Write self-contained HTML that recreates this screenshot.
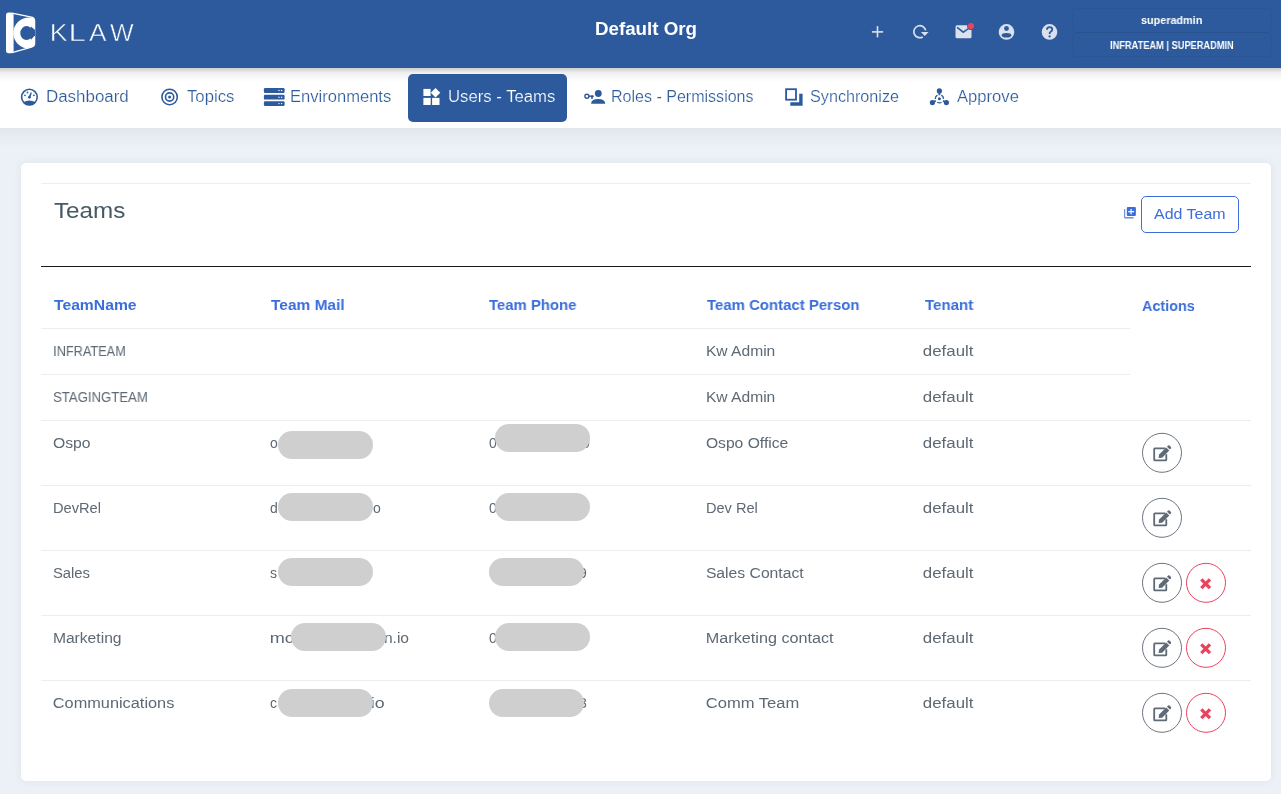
<!DOCTYPE html>
<html><head><meta charset="utf-8">
<style>
*{box-sizing:border-box;margin:0;padding:0}
html,body{width:1281px;height:794px;overflow:hidden;background:#ecf0f7;font-family:"Liberation Sans",sans-serif}
.t{position:absolute;white-space:pre;font-family:"Liberation Sans",sans-serif;will-change:transform}
.abs{position:absolute}
#hdr{position:absolute;left:0;top:0;width:1281px;height:68px;background:#2c5a9c}
#nav{position:absolute;left:0;top:68px;width:1281px;height:60px;background:#fff}
#navshadow{position:absolute;left:0;top:68px;width:1281px;height:14px;background:linear-gradient(rgba(0,0,0,0.2),rgba(0,0,0,0.06) 35%,rgba(0,0,0,0))}
#bgshadow{position:absolute;left:0;top:128px;width:1281px;height:20px;background:linear-gradient(rgba(40,50,60,0.05),rgba(40,50,60,0.02) 50%,rgba(0,0,0,0))}
#active{position:absolute;left:408px;top:74px;width:159px;height:48px;background:#2c5a9c;border-radius:5px}
#card{position:absolute;left:21px;top:163px;width:1250px;height:618px;background:#fff;border-radius:5px;box-shadow:0 0 10px rgba(0,0,0,0.06)}
.ln{position:absolute;height:1px;background:#ebedf0}
.pill{position:absolute;width:95px;height:28px;border-radius:14px;background:#cfcfcf}
.circ{position:absolute;width:40px;height:40px;border-radius:50%;border:1px solid #6b7480}
.circ.del{border-color:#e9435e}
#ubox1,#ubox2{position:absolute;left:1072px;width:200px;border:1px solid rgba(0,0,0,0.035);border-radius:4px}
</style></head><body>
<div id="hdr"></div>
<div id="ubox1" style="top:8px;height:25px"></div>
<div id="ubox2" style="top:32px;height:25px"></div>
<div id="nav"></div>
<div id="navshadow"></div>
<div id="bgshadow"></div>
<div id="active"></div>
<div id="card"></div>
<div class="ln" style="left:41px;top:183px;width:1210px;background:#eceef1"></div>
<div class="ln" style="left:41px;top:266px;width:1210px;background:#1a1a1a"></div>
<div class="ln" style="left:41px;top:328px;width:1089px"></div>
<div class="ln" style="left:41px;top:374px;width:1089px"></div>
<div class="ln" style="left:41px;top:420px;width:1210px"></div>
<div class="ln" style="left:41px;top:485px;width:1210px"></div>
<div class="ln" style="left:41px;top:550px;width:1210px"></div>
<div class="ln" style="left:41px;top:615px;width:1210px"></div>
<div class="ln" style="left:41px;top:680px;width:1210px"></div>
<div class="abs" style="left:1141px;top:196px;width:98px;height:37px;border:1px solid #3b6edb;border-radius:5px"></div>
<div class=t style="left:595px;top:19.76px;font-size:18px;line-height:18px;font-weight:700;color:#fff;transform-origin:1px 0;transform:scaleX(1.0417);">Default Org</div>
<div class=t style="left:1141px;top:14.99px;font-size:11px;line-height:11px;font-weight:700;color:#fff;transform-origin:1px 0;transform:scaleX(0.9836);">superadmin</div>
<div class=t style="left:1110px;top:40.73px;font-size:10px;line-height:10px;font-weight:700;color:#fff;transform-origin:1px 0;transform:scaleX(0.9242);">INFRATEAM | SUPERADMIN</div>
<div class=t style="left:49.8px;top:21.18px;font-size:24px;line-height:24px;font-weight:400;color:#fff;transform-origin:2px 0;transform:scaleX(1.1214);-webkit-text-stroke:0.5px #2c5a9c;">K</div>
<div class=t style="left:68.6px;top:21.18px;font-size:24px;line-height:24px;font-weight:400;color:#fff;transform-origin:2px 0;transform:scaleX(1.3091);-webkit-text-stroke:0.5px #2c5a9c;">L</div>
<div class=t style="left:89.4px;top:21.18px;font-size:24px;line-height:24px;font-weight:400;color:#fff;transform-origin:0px 0;transform:scaleX(1.0938);-webkit-text-stroke:0.5px #2c5a9c;">A</div>
<div class=t style="left:110px;top:21.18px;font-size:24px;line-height:24px;font-weight:400;color:#fff;transform-origin:0px 0;transform:scaleX(1.0435);-webkit-text-stroke:0.5px #2c5a9c;">W</div>
<div class=t style="left:46px;top:89.06px;font-size:16px;line-height:16px;font-weight:400;color:#2c5a9c;transform-origin:1px 0;transform:scaleX(1.0584);-webkit-text-stroke:0.2px #fff;">Dashboard</div>
<div class=t style="left:187px;top:89.06px;font-size:16px;line-height:16px;font-weight:400;color:#2c5a9c;transform-origin:0px 0;transform:scaleX(1.0444);-webkit-text-stroke:0.2px #fff;">Topics</div>
<div class=t style="left:290px;top:89.06px;font-size:16px;line-height:16px;font-weight:400;color:#2c5a9c;transform-origin:1px 0;transform:scaleX(1.0354);-webkit-text-stroke:0.2px #fff;">Environments</div>
<div class=t style="left:447.5px;top:89.06px;font-size:16px;line-height:16px;font-weight:400;color:#fff;transform-origin:1px 0;transform:scaleX(1.0446);-webkit-text-stroke:0.2px #2c5a9c;">Users - Teams</div>
<div class=t style="left:610.7px;top:89.06px;font-size:16px;line-height:16px;font-weight:400;color:#2c5a9c;transform-origin:1px 0;transform:scaleX(1.0021);-webkit-text-stroke:0.2px #fff;">Roles - Permissions</div>
<div class=t style="left:809.5px;top:89.06px;font-size:16px;line-height:16px;font-weight:400;color:#2c5a9c;transform-origin:1px 0;transform:scaleX(1.0115);-webkit-text-stroke:0.2px #fff;">Synchronize</div>
<div class=t style="left:956.7px;top:89.06px;font-size:16px;line-height:16px;font-weight:400;color:#2c5a9c;transform-origin:0px 0;transform:scaleX(1.0390);-webkit-text-stroke:0.2px #fff;">Approve</div>
<div class=t style="left:53.5px;top:199.98px;font-size:22px;line-height:22px;font-weight:400;color:#455a64;transform-origin:0px 0;transform:scaleX(1.1016);">Teams</div>
<div class=t style="left:1154.4px;top:207.15px;font-size:14px;line-height:14px;font-weight:400;color:#3b6edb;transform-origin:0px 0;transform:scaleX(1.1403);">Add Team</div>
<div class=t style="left:53.6px;top:297.28px;font-size:15.5px;line-height:15.5px;font-weight:700;color:#3b6edb;transform-origin:0px 0;transform:scaleX(1.0123);">TeamName</div>
<div class=t style="left:271.1px;top:297.28px;font-size:15.5px;line-height:15.5px;font-weight:700;color:#3b6edb;transform-origin:0px 0;transform:scaleX(0.9973);">Team Mail</div>
<div class=t style="left:489px;top:297.28px;font-size:15.5px;line-height:15.5px;font-weight:700;color:#3b6edb;transform-origin:0px 0;transform:scaleX(0.9593);">Team Phone</div>
<div class=t style="left:706.8px;top:297.28px;font-size:15.5px;line-height:15.5px;font-weight:700;color:#3b6edb;transform-origin:0px 0;transform:scaleX(0.9637);">Team Contact Person</div>
<div class=t style="left:924.8px;top:297.28px;font-size:15.5px;line-height:15.5px;font-weight:700;color:#3b6edb;transform-origin:0px 0;transform:scaleX(0.9700);">Tenant</div>
<div class=t style="left:1142.3px;top:297.88px;font-size:15.5px;line-height:15.5px;font-weight:700;color:#3b6edb;transform-origin:0px 0;transform:scaleX(0.9286);">Actions</div>
<div class=t style="left:52.5px;top:344.25px;font-size:14px;line-height:14px;font-weight:400;color:#5d6975;transform-origin:1px 0;transform:scaleX(0.9103);">INFRATEAM</div>
<div class=t style="left:705.5px;top:344.25px;font-size:14px;line-height:14px;font-weight:400;color:#5d6975;transform-origin:1px 0;transform:scaleX(1.1148);">Kw Admin</div>
<div class=t style="left:923.2px;top:344.25px;font-size:14px;line-height:14px;font-weight:400;color:#5d6975;transform-origin:1px 0;transform:scaleX(1.2049);">default</div>
<div class=t style="left:52.5px;top:390.25px;font-size:14px;line-height:14px;font-weight:400;color:#5d6975;transform-origin:1px 0;transform:scaleX(0.9394);">STAGINGTEAM</div>
<div class=t style="left:705.5px;top:390.25px;font-size:14px;line-height:14px;font-weight:400;color:#5d6975;transform-origin:1px 0;transform:scaleX(1.1148);">Kw Admin</div>
<div class=t style="left:923.2px;top:390.25px;font-size:14px;line-height:14px;font-weight:400;color:#5d6975;transform-origin:1px 0;transform:scaleX(1.2049);">default</div>
<div class=t style="left:52.5px;top:436.25px;font-size:14px;line-height:14px;font-weight:400;color:#5d6975;transform-origin:1px 0;transform:scaleX(1.1250);">Ospo</div>
<div class=t style="left:705.5px;top:436.25px;font-size:14px;line-height:14px;font-weight:400;color:#5d6975;transform-origin:1px 0;transform:scaleX(1.1181);">Ospo Office</div>
<div class=t style="left:923.2px;top:436.25px;font-size:14px;line-height:14px;font-weight:400;color:#5d6975;transform-origin:1px 0;transform:scaleX(1.2049);">default</div>
<div class=t style="left:52.5px;top:501.25px;font-size:14px;line-height:14px;font-weight:400;color:#5d6975;transform-origin:1px 0;transform:scaleX(1.0455);">DevRel</div>
<div class=t style="left:705.5px;top:501.25px;font-size:14px;line-height:14px;font-weight:400;color:#5d6975;transform-origin:1px 0;transform:scaleX(1.0417);">Dev Rel</div>
<div class=t style="left:923.2px;top:501.25px;font-size:14px;line-height:14px;font-weight:400;color:#5d6975;transform-origin:1px 0;transform:scaleX(1.2049);">default</div>
<div class=t style="left:52.5px;top:566.25px;font-size:14px;line-height:14px;font-weight:400;color:#5d6975;transform-origin:1px 0;transform:scaleX(1.0588);">Sales</div>
<div class=t style="left:705.5px;top:566.25px;font-size:14px;line-height:14px;font-weight:400;color:#5d6975;transform-origin:1px 0;transform:scaleX(1.1221);">Sales Contact</div>
<div class=t style="left:923.2px;top:566.25px;font-size:14px;line-height:14px;font-weight:400;color:#5d6975;transform-origin:1px 0;transform:scaleX(1.2049);">default</div>
<div class=t style="left:52.5px;top:631.25px;font-size:14px;line-height:14px;font-weight:400;color:#5d6975;transform-origin:1px 0;transform:scaleX(1.1167);">Marketing</div>
<div class=t style="left:705.5px;top:631.25px;font-size:14px;line-height:14px;font-weight:400;color:#5d6975;transform-origin:1px 0;transform:scaleX(1.1560);">Marketing contact</div>
<div class=t style="left:923.2px;top:631.25px;font-size:14px;line-height:14px;font-weight:400;color:#5d6975;transform-origin:1px 0;transform:scaleX(1.2049);">default</div>
<div class=t style="left:52.5px;top:696.25px;font-size:14px;line-height:14px;font-weight:400;color:#5d6975;transform-origin:1px 0;transform:scaleX(1.1650);">Communications</div>
<div class=t style="left:705.5px;top:696.25px;font-size:14px;line-height:14px;font-weight:400;color:#5d6975;transform-origin:1px 0;transform:scaleX(1.1818);">Comm Team</div>
<div class=t style="left:923.2px;top:696.25px;font-size:14px;line-height:14px;font-weight:400;color:#5d6975;transform-origin:1px 0;transform:scaleX(1.2049);">default</div>
<div class=t style="left:270.3px;top:436.15px;font-size:14px;line-height:14px;font-weight:400;color:#5d6975;transform-origin:1px 0;transform:scaleX(1.0000);">o</div>
<div class=t style="left:489px;top:436.15px;font-size:14px;line-height:14px;font-weight:400;color:#5d6975;transform-origin:0px 0;transform:scaleX(1.0000);">0</div>
<div class=t style="left:582px;top:436.15px;font-size:14px;line-height:14px;font-weight:400;color:#5d6975;transform-origin:0px 0;transform:scaleX(1.0000);">0</div>
<div class=t style="left:270.3px;top:501.15px;font-size:14px;line-height:14px;font-weight:400;color:#5d6975;transform-origin:1px 0;transform:scaleX(1.0000);">d</div>
<div class=t style="left:372.6px;top:501.15px;font-size:14px;line-height:14px;font-weight:400;color:#5d6975;transform-origin:1px 0;transform:scaleX(1.0000);">o</div>
<div class=t style="left:489px;top:501.15px;font-size:14px;line-height:14px;font-weight:400;color:#5d6975;transform-origin:0px 0;transform:scaleX(1.0000);">0</div>
<div class=t style="left:270.3px;top:566.15px;font-size:14px;line-height:14px;font-weight:400;color:#5d6975;transform-origin:1px 0;transform:scaleX(1.0000);">s</div>
<div class=t style="left:579px;top:566.15px;font-size:14px;line-height:14px;font-weight:400;color:#5d6975;transform-origin:1px 0;transform:scaleX(1.0000);">9</div>
<div class=t style="left:270.3px;top:631.15px;font-size:14px;line-height:14px;font-weight:400;color:#5d6975;transform-origin:1px 0;transform:scaleX(1.2941);">mc</div>
<div class=t style="left:383.6px;top:631.15px;font-size:14px;line-height:14px;font-weight:400;color:#5d6975;transform-origin:1px 0;transform:scaleX(1.1143);">n.io</div>
<div class=t style="left:489px;top:631.15px;font-size:14px;line-height:14px;font-weight:400;color:#5d6975;transform-origin:0px 0;transform:scaleX(1.0000);">0</div>
<div class=t style="left:270.3px;top:696.15px;font-size:14px;line-height:14px;font-weight:400;color:#5d6975;transform-origin:1px 0;transform:scaleX(1.0000);">c</div>
<div class=t style="left:371px;top:696.15px;font-size:14px;line-height:14px;font-weight:400;color:#5d6975;transform-origin:1px 0;transform:scaleX(1.2667);">io</div>
<div class=t style="left:579px;top:696.15px;font-size:14px;line-height:14px;font-weight:400;color:#5d6975;transform-origin:1px 0;transform:scaleX(1.0000);">3</div>
<div class=pill style="left:278.3px;top:431.2px"></div>
<div class=pill style="left:494.7px;top:424.2px"></div>
<div class=pill style="left:278.3px;top:492.5px"></div>
<div class=pill style="left:494.7px;top:492.5px"></div>
<div class=pill style="left:278.3px;top:557.6px"></div>
<div class=pill style="left:488.5px;top:557.6px"></div>
<div class=pill style="left:290.9px;top:622.5px"></div>
<div class=pill style="left:494.7px;top:622.5px"></div>
<div class=pill style="left:278.3px;top:689px"></div>
<div class=pill style="left:488.5px;top:689px"></div>
<svg class="abs" style="left:0;top:0" width="1281" height="794" viewBox="0 0 1281 794">
<defs>
<clipPath id="trap"><path d="M8.5 12.8 L31.5 17.2 Q34.3 17.9 34.3 20.5 L34.3 44 Q34.3 46.4 31.5 47 L8.5 53.2 Z"/></clipPath>
</defs>
<!-- Klaw logo -->
<g fill="#fff">
<rect x="6" y="12.6" width="7.6" height="40.6" rx="2.6"/>
<path d="M12 13.2 L31.5 17.2 Q34.6 18 34.6 20.8 L34.6 43.6 Q34.6 46.3 31.5 47.1 L12 52.6" fill="none" stroke="#fff" stroke-width="1.3"/>
<g clip-path="url(#trap)">
<path fill-rule="evenodd" d="M29 17.5 A15.7 15.5 0 1 0 29 48.5 A15.7 15.5 0 1 0 29 17.5 Z M26.5 26.1 A6.2 7 0 1 0 26.5 40.1 A6.2 7 0 1 0 26.5 26.1 Z"/>
</g>
<path d="M28 33.1 L31 26.5 L35 30.1 L35 35.2 L31 39.8 Z" fill="#2c5a9c"/>
</g>
<!-- header icons -->
<g fill="#d9e1ec" stroke="none">
<rect x="871.9" y="31.1" width="11.2" height="1.6"/>
<rect x="876.7" y="26.1" width="1.6" height="11.3"/>
<path d="M922.8 36.9 A6 6 0 1 1 925.7 30.4" fill="none" stroke="#d9e1ec" stroke-width="1.7"/>
<path d="M920.9 31.9 L928.6 31.9 L924.75 36.1 Z"/>
<rect x="955.5" y="25.3" width="16" height="13" rx="1.6"/>
<path d="M957.1 27.3 L963.3 32.2 L969.3 28" fill="none" stroke="#2c5a9c" stroke-width="1.5"/>
<circle cx="971" cy="26" r="3.9" fill="#2c5a9c"/>
<circle cx="971" cy="26" r="3.1" fill="#e9435e"/>
<circle cx="1006.5" cy="31.9" r="7.8"/>
<circle cx="1006.5" cy="28.5" r="2.4" fill="#2c5a9c"/>
<ellipse cx="1006.5" cy="35.2" rx="4.8" ry="2.3" fill="#2c5a9c"/>
<circle cx="1049.5" cy="31.9" r="7.8"/>
<path d="M1046.9 29.7 Q1046.9 27.1 1049.6 27.1 Q1052.3 27.1 1052.3 29.5 Q1052.3 31 1050.6 31.8 Q1049.6 32.4 1049.6 34" fill="none" stroke="#2c5a9c" stroke-width="1.8"/>
<circle cx="1049.6" cy="36.4" r="1.1" fill="#2c5a9c"/>
</g>
<!-- nav icons -->
<g fill="#2c5a9c">
<!-- dashboard -->
<circle cx="29.4" cy="97.1" r="7.8" fill="none" stroke="#2c5a9c" stroke-width="1.6"/>
<path d="M23.2 102.2 Q29.4 98.6 35.6 102.2 L34.2 104 Q29.4 106.6 24.6 104 Z"/>
<path d="M28.4 97.2 L30.8 92.2 L31.9 92.7 L30.2 97.9 Z"/>
<circle cx="29.4" cy="97.3" r="1.4"/>
<circle cx="25" cy="95.3" r="0.9"/>
<circle cx="27.5" cy="92.5" r="0.9"/>
<circle cx="33.9" cy="95.3" r="0.9"/>
<!-- topics -->
<circle cx="169.6" cy="97" r="7.7" fill="none" stroke="#2c5a9c" stroke-width="1.6"/>
<circle cx="169.6" cy="97" r="4.1" fill="none" stroke="#2c5a9c" stroke-width="1.6"/>
<circle cx="169.6" cy="97" r="1.5"/>
<!-- environments -->
<rect x="263.9" y="88.1" width="20.7" height="4.8" rx="1.2"/>
<rect x="263.9" y="94.8" width="20.7" height="4.8" rx="1.2"/>
<rect x="263.9" y="101.2" width="20.7" height="4.8" rx="1.2"/>
<g fill="#fff"><circle cx="279" cy="90.5" r="0.7"/><circle cx="281.6" cy="90.5" r="0.7"/><circle cx="279" cy="97.2" r="0.7"/><circle cx="281.6" cy="97.2" r="0.7"/><circle cx="279" cy="103.6" r="0.7"/><circle cx="281.6" cy="103.6" r="0.7"/></g>
<!-- roles -->
<circle cx="586.9" cy="96.2" r="2" fill="none" stroke="#2c5a9c" stroke-width="1.4"/>
<rect x="588.6" y="95.5" width="5.2" height="1.4"/>
<rect x="591.1" y="95.5" width="1.8" height="3.2"/>
<circle cx="598.3" cy="93.5" r="3.4"/>
<path d="M591.1 103.8 Q591.1 98.9 598.2 98.9 Q605.2 98.9 605.2 103.8 Z"/>
<!-- synchronize -->
<rect x="786.1" y="89.2" width="9.9" height="10.5" fill="none" stroke="#2c5a9c" stroke-width="1.8"/>
<path d="M799.2 93.8 L802.6 93.8 L802.6 105.8 L790.3 105.8 L790.3 102.2 L799.2 102.2 Z"/>
<!-- approve -->
<circle cx="939.4" cy="90.9" r="2.6"/>
<circle cx="932.4" cy="102.6" r="2.6"/>
<circle cx="946.4" cy="102.6" r="2.6"/>
<circle cx="939.4" cy="98.8" r="1.5"/>
<path d="M939.4 91 L939.4 95.3 M932.4 102.6 L935.85 100.85 M946.4 102.6 L942.95 100.85" stroke="#2c5a9c" stroke-width="1.7"/>
<path d="M941.32 95.18 A4.1 4.1 0 0 1 943.50 98.94" fill="none" stroke="#2c5a9c" stroke-width="1.3"/><path d="M941.57 102.28 A4.1 4.1 0 0 1 937.23 102.28" fill="none" stroke="#2c5a9c" stroke-width="1.3"/><path d="M935.30 98.94 A4.1 4.1 0 0 1 937.48 95.18" fill="none" stroke="#2c5a9c" stroke-width="1.3"/>
</g>
<!-- users-teams (white) -->
<g fill="#fff">
<rect x="423.4" y="88.9" width="7.2" height="7.1"/>
<rect x="423.4" y="97.9" width="7.3" height="7.1"/>
<rect x="432.1" y="97.9" width="7.4" height="7.1"/>
<path d="M435.5 87.9 L440.3 92.7 L435.5 97.4 L430.8 92.7 Z"/>
</g>
<!-- add team icon -->
<g fill="#3b6edb">
<path d="M1124 209 L1125.2 209 L1125.2 217.1 L1133.6 217.1 L1133.6 218.6 L1125 218.6 Q1124 218.6 1124 217.6 Z" opacity="0.75"/>
<rect x="1126.8" y="206.9" width="9.1" height="9.1" rx="1.1"/>
<rect x="1128.2" y="211.05" width="5.9" height="1.2" fill="#fff"/>
<rect x="1130.5" y="209" width="1.2" height="5.3" fill="#fff"/>
</g>
<circle cx="1162" cy="452.8" r="19.5" fill="none" stroke="#6b7480" stroke-width="1"/>
<g transform="translate(1142 432.8)" fill="#5f6a77"><path d="M23.3 15.5 L12.9 15.5 Q12.2 15.5 12.2 16.2 L12.2 26.9 Q12.2 27.6 12.9 27.6 L23.6 27.6 Q24.3 27.6 24.3 26.9 L24.3 21.5" fill="none" stroke="#5f6a77" stroke-width="1.8"/><path d="M16.6 25.2 L17.1 21.8 L24.2 14.7 L27.3 17.8 L20.2 24.9 Z"/><path d="M25 13.9 L26.1 12.8 Q26.8 12.2 27.5 12.8 L28.9 14.2 Q29.5 14.9 28.9 15.6 L27.9 16.7 Z"/></g>
<circle cx="1162" cy="517.8" r="19.5" fill="none" stroke="#6b7480" stroke-width="1"/>
<g transform="translate(1142 497.8)" fill="#5f6a77"><path d="M23.3 15.5 L12.9 15.5 Q12.2 15.5 12.2 16.2 L12.2 26.9 Q12.2 27.6 12.9 27.6 L23.6 27.6 Q24.3 27.6 24.3 26.9 L24.3 21.5" fill="none" stroke="#5f6a77" stroke-width="1.8"/><path d="M16.6 25.2 L17.1 21.8 L24.2 14.7 L27.3 17.8 L20.2 24.9 Z"/><path d="M25 13.9 L26.1 12.8 Q26.8 12.2 27.5 12.8 L28.9 14.2 Q29.5 14.9 28.9 15.6 L27.9 16.7 Z"/></g>
<circle cx="1162" cy="582.8" r="19.5" fill="none" stroke="#6b7480" stroke-width="1"/>
<g transform="translate(1142 562.8)" fill="#5f6a77"><path d="M23.3 15.5 L12.9 15.5 Q12.2 15.5 12.2 16.2 L12.2 26.9 Q12.2 27.6 12.9 27.6 L23.6 27.6 Q24.3 27.6 24.3 26.9 L24.3 21.5" fill="none" stroke="#5f6a77" stroke-width="1.8"/><path d="M16.6 25.2 L17.1 21.8 L24.2 14.7 L27.3 17.8 L20.2 24.9 Z"/><path d="M25 13.9 L26.1 12.8 Q26.8 12.2 27.5 12.8 L28.9 14.2 Q29.5 14.9 28.9 15.6 L27.9 16.7 Z"/></g>
<circle cx="1206" cy="582.8" r="19.5" fill="none" stroke="#e9435e" stroke-width="1"/>
<g transform="translate(1186 562.8)" stroke="#e9435e" stroke-width="3.3" stroke-linecap="butt"><path d="M15.3 16.6 L24 25.3 M24 16.6 L15.3 25.3"/></g>
<circle cx="1162" cy="647.8" r="19.5" fill="none" stroke="#6b7480" stroke-width="1"/>
<g transform="translate(1142 627.8)" fill="#5f6a77"><path d="M23.3 15.5 L12.9 15.5 Q12.2 15.5 12.2 16.2 L12.2 26.9 Q12.2 27.6 12.9 27.6 L23.6 27.6 Q24.3 27.6 24.3 26.9 L24.3 21.5" fill="none" stroke="#5f6a77" stroke-width="1.8"/><path d="M16.6 25.2 L17.1 21.8 L24.2 14.7 L27.3 17.8 L20.2 24.9 Z"/><path d="M25 13.9 L26.1 12.8 Q26.8 12.2 27.5 12.8 L28.9 14.2 Q29.5 14.9 28.9 15.6 L27.9 16.7 Z"/></g>
<circle cx="1206" cy="647.8" r="19.5" fill="none" stroke="#e9435e" stroke-width="1"/>
<g transform="translate(1186 627.8)" stroke="#e9435e" stroke-width="3.3" stroke-linecap="butt"><path d="M15.3 16.6 L24 25.3 M24 16.6 L15.3 25.3"/></g>
<circle cx="1162" cy="712.8" r="19.5" fill="none" stroke="#6b7480" stroke-width="1"/>
<g transform="translate(1142 692.8)" fill="#5f6a77"><path d="M23.3 15.5 L12.9 15.5 Q12.2 15.5 12.2 16.2 L12.2 26.9 Q12.2 27.6 12.9 27.6 L23.6 27.6 Q24.3 27.6 24.3 26.9 L24.3 21.5" fill="none" stroke="#5f6a77" stroke-width="1.8"/><path d="M16.6 25.2 L17.1 21.8 L24.2 14.7 L27.3 17.8 L20.2 24.9 Z"/><path d="M25 13.9 L26.1 12.8 Q26.8 12.2 27.5 12.8 L28.9 14.2 Q29.5 14.9 28.9 15.6 L27.9 16.7 Z"/></g>
<circle cx="1206" cy="712.8" r="19.5" fill="none" stroke="#e9435e" stroke-width="1"/>
<g transform="translate(1186 692.8)" stroke="#e9435e" stroke-width="3.3" stroke-linecap="butt"><path d="M15.3 16.6 L24 25.3 M24 16.6 L15.3 25.3"/></g>
</svg>

</body></html>
